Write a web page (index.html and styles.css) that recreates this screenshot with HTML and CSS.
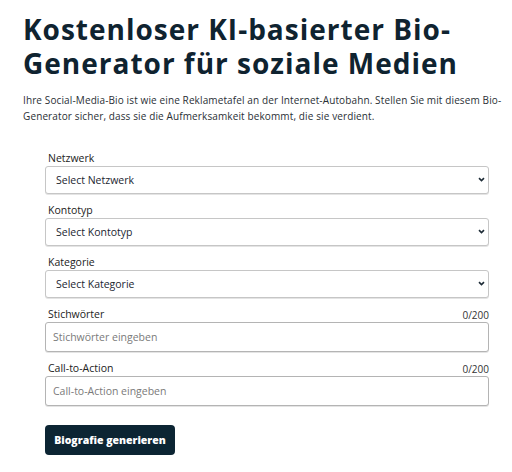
FILE: index.html
```html
<!DOCTYPE html>
<html lang="de">
<head>
<meta charset="utf-8">
<title>Bio-Generator</title>
<link rel="stylesheet" href="styles.css">
</head>
<body>
<div class="page">
  <h1 class="title">Kostenloser KI-basierter Bio-Generator für soziale Medien</h1>
  <p class="intro">Ihre Social-Media-Bio ist wie eine Reklametafel an der Internet-Autobahn. Stellen Sie mit diesem Bio-Generator sicher, dass sie die Aufmerksamkeit bekommt, die sie verdient.</p>
  <form class="form">
    <div class="field field-select">
      <label class="label">Netzwerk</label>
      <div class="select-wrap">
        <select class="select"><option>Select Netzwerk</option></select>
        <svg class="chev" width="7" height="5" viewBox="0 0 7 5"><path d="M1 1.2 L3.5 3.6 L6 1.2" fill="none" stroke="#1d2b36" stroke-width="1.6"/></svg>
      </div>
    </div>
    <div class="field field-select">
      <label class="label">Kontotyp</label>
      <div class="select-wrap">
        <select class="select"><option>Select Kontotyp</option></select>
        <svg class="chev" width="7" height="5" viewBox="0 0 7 5"><path d="M1 1.2 L3.5 3.6 L6 1.2" fill="none" stroke="#1d2b36" stroke-width="1.6"/></svg>
      </div>
    </div>
    <div class="field field-select">
      <label class="label">Kategorie</label>
      <div class="select-wrap">
        <select class="select"><option>Select Kategorie</option></select>
        <svg class="chev" width="7" height="5" viewBox="0 0 7 5"><path d="M1 1.2 L3.5 3.6 L6 1.2" fill="none" stroke="#1d2b36" stroke-width="1.6"/></svg>
      </div>
    </div>
    <div class="field field-input">
      <div class="label-row"><label class="label">Stichwörter</label><span class="count">0/200</span></div>
      <input class="input" type="text" placeholder="Stichwörter eingeben">
    </div>
    <div class="field field-input">
      <div class="label-row"><label class="label">Call-to-Action</label><span class="count">0/200</span></div>
      <input class="input" type="text" placeholder="Call-to-Action eingeben">
    </div>
    <button class="btn" type="button">Biografie generieren</button>
  </form>
</div>
</body>
</html>
```
FILE: styles.css
```css
* { box-sizing: border-box; }
html, body { margin: 0; padding: 0; background: #ffffff; }
body { font-family: "Open Sans", "Noto Sans", sans-serif; color: #1f2a33; }

.page { padding: 0 1px 0 23px; }

.title {
  margin: 12px 0 0 0;
  font-size: 28px;
  line-height: 34px;
  font-weight: 700;
  color: #0f2330;
  letter-spacing: 1px;
}

.intro {
  margin: 13px 0 0 0;
  font-size: 10px;
  line-height: 15.5px;
  color: #2a2f35;
  letter-spacing: 0.12px;
}

.form { margin: 27px 22px 0 22px; }

.field { margin-bottom: 9px; }
.field-input { margin-bottom: 9px; }

.label-row { display: flex; justify-content: space-between; align-items: center; }
.label {
  display: block;
  font-size: 10.5px;
  line-height: 14px;
  color: #222;
  margin: 0 0 1px 3px;
}
.count { font-size: 10px; line-height: 14px; color: #333; }

.select-wrap { position: relative; }
.select {
  display: block;
  width: 100%;
  height: 28px;
  appearance: none;
  -webkit-appearance: none;
  border: 1px solid #c6c6c6;
  border-radius: 3px;
  background: #fff;
  padding: 0 10px;
  font-family: inherit;
  font-size: 10.5px;
  color: #1b2631;
  box-shadow: 0 1px 0 #e4e4e4;
}
.chev { position: absolute; right: 4px; top: 11px; }

.input {
  display: block;
  width: 100%;
  height: 30px;
  border: 1px solid #b4b4b4;
  border-radius: 3px;
  padding: 0 7px;
  font-family: inherit;
  font-size: 10.5px;
  color: #1b2631;
  box-shadow: 0 1px 0 #e4e4e4;
}
.input::placeholder { color: #7a7a7a; }

.btn {
  margin-top: 10px;
  height: 30px;
  width: 130px;
  background: #0c2533;
  color: #fff;
  border: 0;
  border-radius: 4px;
  font-family: inherit;
  font-weight: 800;
  font-size: 10.5px;
}
```
